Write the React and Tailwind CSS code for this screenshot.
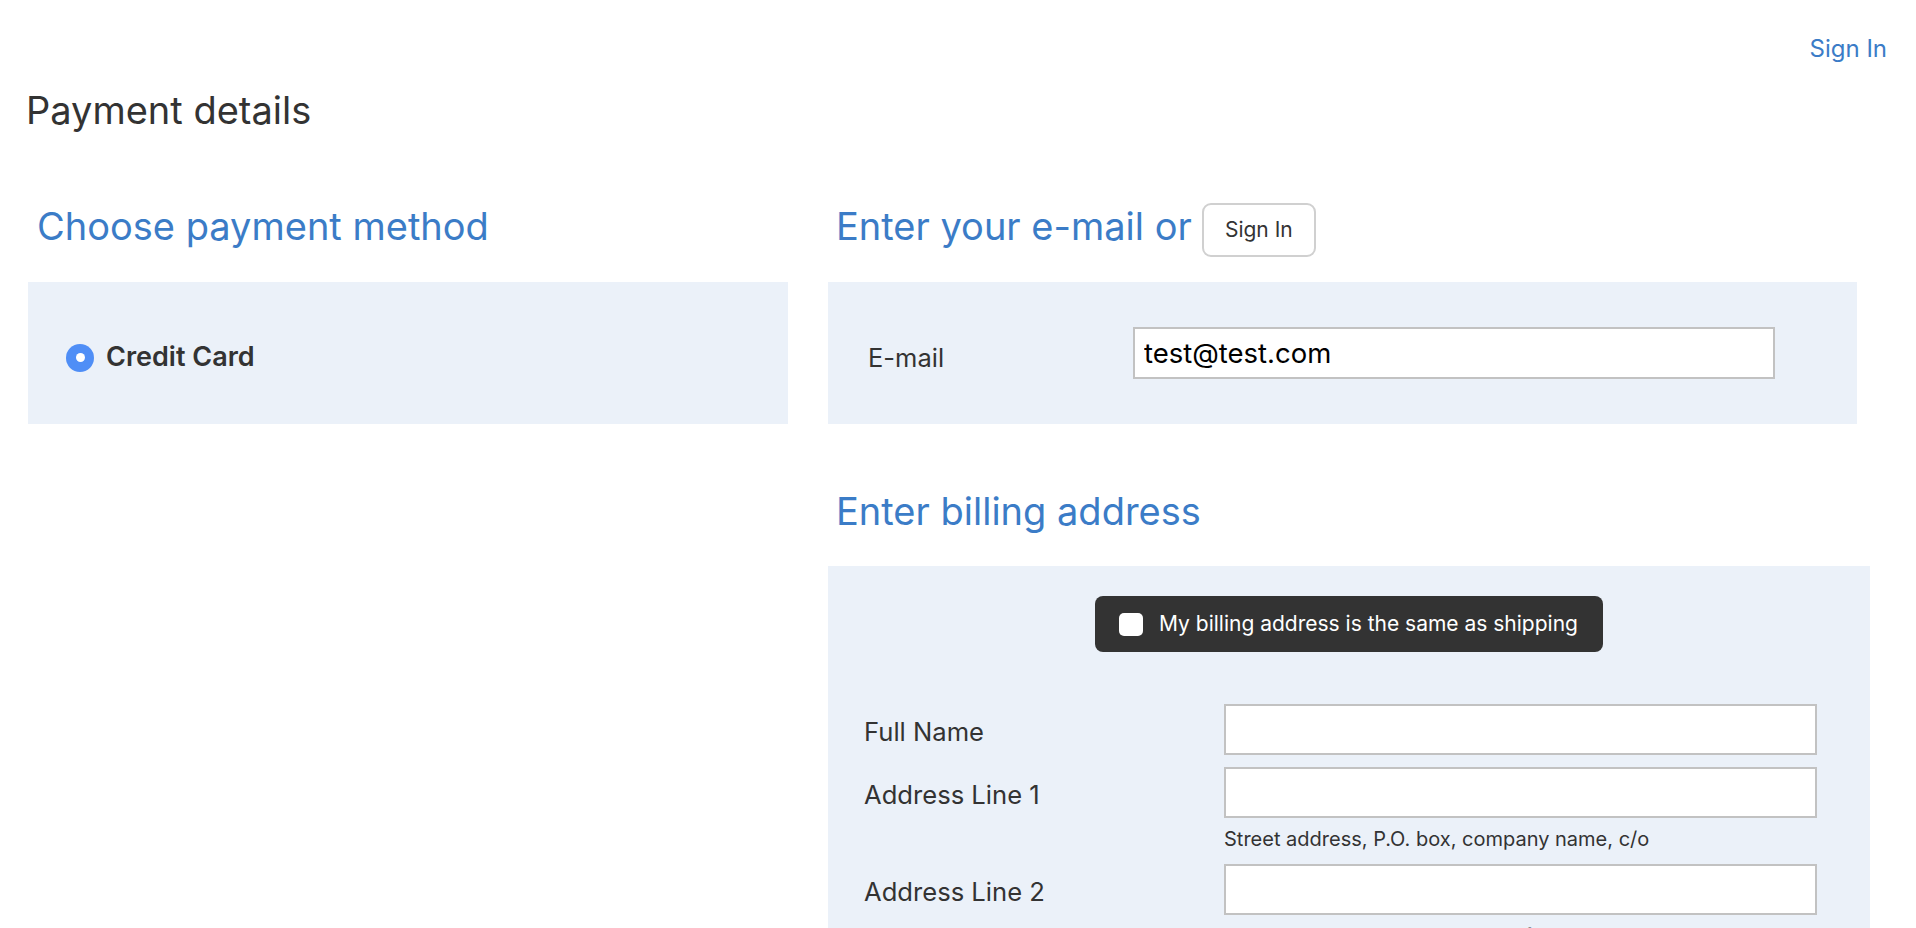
import React from 'react';

const font = "font-['Inter','Noto_Sans',sans-serif]";

function Radio() {
  return (
    <span className="flex h-[28px] w-[28px] items-center justify-center rounded-full bg-[#4f8ef6]">
      <span className="h-[9px] w-[9px] rounded-full bg-white" />
    </span>
  );
}

function Field({ label, hint, value = '' }) {
  return (
    <div className="flex flex-col">
      <div className="flex items-center">
        <label className="w-[360px] shrink-0 pt-[6px] text-[25.6px] text-[#333]">{label}</label>
        <input
          readOnly
          value={value}
          className="h-[51px] w-[593px] border-2 border-[#c2c2c2] bg-white px-[8px] text-[24px] outline-none"
        />
      </div>
      {hint && (
        <p className="ml-[360px] mt-[10px] text-[20px] leading-[22px] text-[#333]">{hint}</p>
      )}
    </div>
  );
}

export default function App() {
  return (
    <div className={`${font} min-h-screen bg-white pt-[34px] text-[#333]`}>
      <header className="flex h-[30px] justify-end pr-[29px]">
        <a href="#" className="text-[24px] leading-[30px] text-[#3b7cc7]">Sign In</a>
      </header>

      <h1 className="mt-[24px] h-[44px] pl-[26px] text-[38px] leading-[44px] text-[#333]">Payment details</h1>

      <div className="mt-[71px] flex gap-[40px] pl-[28px]">
        {/* payment method */}
        <section className="w-[760px] shrink-0">
          <div className="mb-[25px] flex h-[54px] items-center pl-[9px]">
            <h2 className="-mt-[7px] text-[38px] text-[#3b7cc7]">Choose payment method</h2>
          </div>
          <div className="flex h-[142px] items-center bg-[#ebf1f9] pl-[38px] pt-[9px]">
            <Radio />
            <span className="ml-[12px] text-[27px] font-semibold text-[#333]">Credit Card</span>
          </div>
        </section>

        {/* contact + billing */}
        <section className="w-[1042px] shrink-0">
          <div className="mb-[25px] flex h-[54px] items-center pl-[8px]">
            <h2 className="-mt-[7px] text-[38px] text-[#3b7cc7]">Enter your e-mail or</h2>
            <button className="ml-[10px] h-[54px] w-[114px] rounded-[9px] border-2 border-[#d0d0d0] bg-white text-[21px] text-[#333]">
              Sign In
            </button>
          </div>
          <div className="flex h-[142px] w-[1029px] items-center bg-[#ebf1f9] pl-[40px]">
            <label className="w-[265px] shrink-0 pt-[10px] text-[25.5px] text-[#333]">E-mail</label>
            <input
              readOnly
              value="test@test.com"
              className="h-[52px] w-[642px] border-2 border-[#c2c2c2] bg-white px-[9px] text-[27.5px] text-black outline-none"
            />
          </div>

          <div className="mb-[28px] mt-[60px] flex h-[54px] items-center pl-[8px]">
            <h2 className="text-[38px] text-[#3b7cc7]">Enter billing address</h2>
          </div>
          <div className="bg-[#ebf1f9] pb-[40px] pl-[36px] pt-[30px]">
            <div className="-ml-[36px] flex justify-center">
              <label className="flex h-[56px] w-[508px] items-center rounded-[8px] bg-[#333] pl-[24px]">
                <span className="h-[23px] w-[24px] rounded-[5px] bg-white" />
                <span className="ml-[16px] text-[21px] text-white">My billing address is the same as shipping</span>
              </label>
            </div>
            <div className="mt-[52px] flex flex-col">
              <Field label="Full Name" />
              <div className="mt-[12px]">
                <Field label="Address Line 1" hint="Street address, P.O. box, company name, c/o" />
              </div>
              <div className="mt-[14px]">
                <Field label="Address Line 2" hint="Apartment, suite, unit, building, floor, etc." />
              </div>
            </div>
          </div>
        </section>
      </div>
    </div>
  );
}
